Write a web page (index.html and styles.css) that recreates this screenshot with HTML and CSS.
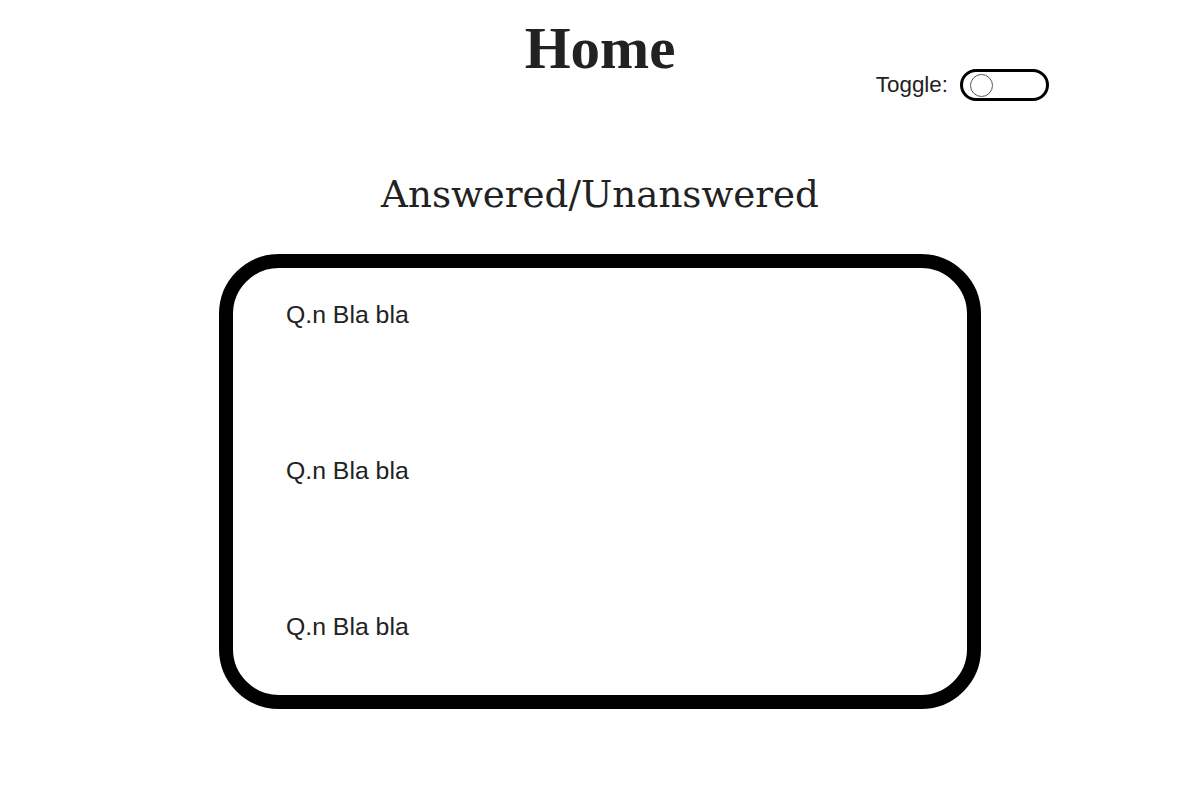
FILE: index.html
```html
<!DOCTYPE html>
<html lang="en">
<head>
<meta charset="utf-8">
<title>Home</title>
<link rel="stylesheet" href="styles.css">
</head>
<body>
<header class="top">
  <h1 class="title">Home</h1>
  <div class="toggle-wrap">
    <span class="toggle-label">Toggle:</span>
    <span class="toggle"><span class="knob"></span></span>
  </div>
</header>
<h2 class="subtitle">Answered/Unanswered</h2>
<section class="box">
  <div class="row">Q.n Bla bla</div>
  <div class="row">Q.n Bla bla</div>
  <div class="row">Q.n Bla bla</div>
</section>
</body>
</html>
```
FILE: styles.css
```css
html, body {
  margin: 0;
  padding: 0;
  background: #ffffff;
  color: #222222;
  font-family: "Liberation Sans", Arial, sans-serif;
}

.top {
  display: grid;
  grid-template-columns: 1fr auto 1fr;
  align-items: start;
  padding-top: 19px;
}

.title {
  grid-column: 2;
  margin: 0;
  font-family: "Liberation Serif", "Times New Roman", serif;
  font-weight: 700;
  font-size: 59px;
  line-height: 59px;
  color: #222222;
}

.toggle-wrap {
  grid-column: 3;
  justify-self: end;
  margin-top: 50px;
  margin-right: 151px;
  display: flex;
  align-items: center;
  gap: 12px;
}

.toggle-label {
  font-size: 22.4px;
  line-height: 26px;
  color: #222222;
}

.toggle {
  box-sizing: border-box;
  width: 89px;
  height: 32px;
  border: 3px solid #000000;
  border-radius: 16px;
  display: flex;
  align-items: center;
  padding-left: 7px;
}

.knob {
  box-sizing: border-box;
  width: 23px;
  height: 23px;
  border: 1px solid #555555;
  border-radius: 50%;
  background: #ffffff;
}

.subtitle {
  margin: 71px 0 0;
  text-align: center;
  font-family: "DejaVu Serif", Georgia, serif;
  font-weight: 400;
  font-size: 37.2px;
  line-height: 44px;
  color: #222222;
}

.box {
  box-sizing: border-box;
  width: 762px;
  height: 455px;
  margin: 38px auto 0;
  border: 14px solid #000000;
  border-radius: 60px;
  padding: 33px 0 0 53px;
  display: flex;
  flex-direction: column;
  gap: 128px;
}

.row {
  font-size: 24.8px;
  line-height: 28px;
  color: #222222;
}
```
